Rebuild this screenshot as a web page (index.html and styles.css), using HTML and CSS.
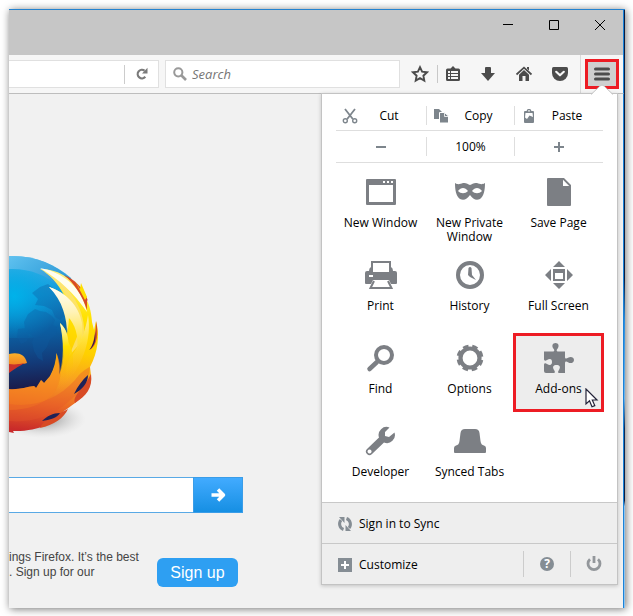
FILE: index.html
```html
<!DOCTYPE html>
<html lang="en">
<head>
<meta charset="utf-8">
<title>Firefox menu</title>
<link rel="stylesheet" href="styles.css">
</head>
<body>
<div class="window">
  <header class="titlebar">
    <button class="caption" aria-label="Minimize"><svg width="12" height="12"><path d="M1 5.500h10"/></svg></button>
    <button class="caption" aria-label="Maximize"><svg width="12" height="12"><path d="M1.500 1.500h9v9h-9z"/></svg></button>
    <button class="caption" aria-label="Close"><svg width="12" height="12"><path d="M1 1l10 10M11 1L1 11"/></svg></button>
  </header>

  <nav class="toolbar">
    <div class="urlbar">
      <input class="url" type="text" aria-label="Address">
      <button class="reload" aria-label="Reload"><svg width="14" height="14" viewBox="0 0 14 14"><path d="M10.300 9.800A4.300 4.300 0 1 1 9.600 3.600" fill="none" stroke="#7a7a7a" stroke-width="2.200"/><path d="M12.500.800v5.600H7z" fill="#7a7a7a"/></svg></button>
    </div>
    <label class="search">
      <svg width="14" height="14" viewBox="0 0 14 14" fill="none" stroke="#999" ><circle cx="5.300" cy="5.300" r="4.100" stroke-width="2"/><path d="M8.500 8.500l4.500 4.500" stroke-width="2.600"/></svg>
      <input type="text" placeholder="Search" aria-label="Search">
    </label>
    <div class="tools">
      <button class="tool" aria-label="Bookmark"><svg width="18" height="18" viewBox="0 0 18 18"><path d="M9 2.200l2.100 4.500 4.900.600-3.600 3.400.900 4.900L9 13.200l-4.300 2.400.900-4.900L2 7.300l4.900-.600z" fill="none" stroke="#4c4c4c" stroke-width="1.900"/></svg></button>
      <button class="tool tool-list" aria-label="Bookmarks list"><svg width="18" height="18" viewBox="0 0 18 18"><path fill="#4c4c4c" fill-rule="evenodd" d="M6.500 3.500L9 1l2.500 2.500h3A1.500 1.500 0 0 1 16 5v9.500a1.500 1.500 0 0 1-1.500 1.500h-11A1.500 1.500 0 0 1 2 14.500V5a1.500 1.500 0 0 1 1.500-1.500zM4 6v2h2V6zm3 0v2h7V6zM4 9v2h2V9zm3 0v2h7V9zm-3 3v2h2v-2zm3 0v2h7v-2z"/></svg></button>
      <button class="tool" aria-label="Downloads"><svg width="18" height="18" viewBox="0 0 18 18"><path fill="#4c4c4c" d="M7 2h4q1 0 1 1v5h4L9 16 2 8h4V3q0-1 1-1z"/></svg></button>
      <button class="tool" aria-label="Home"><svg width="18" height="18" viewBox="0 0 18 18"><path fill="none" stroke="#4c4c4c" stroke-width="1.700" d="M1.500 9.500L9 2.600l7.500 6.900"/><path fill="#4c4c4c" d="M9 5l5 4.700V16h-3.500v-5h-3v5H4V9.700zM12 2h2v3.500l-2-1.800z"/></svg></button>
      <button class="tool" aria-label="Pocket"><svg width="18" height="18" viewBox="0 0 18 18"><path fill="#4c4c4c" d="M2.500 2h13Q17 2 17 3.500V8a8 8 0 0 1-16 0V3.500Q1 2 2.500 2z"/><path d="M5.200 6.800L9 10.300l3.800-3.500" fill="none" stroke="#f6f6f6" stroke-width="2.200" stroke-linecap="round" stroke-linejoin="round"/></svg></button>
    </div>
    <div class="menu-slot"><button class="menu-button" aria-label="Open menu"><svg width="16" height="16" viewBox="0 0 16 16"><path d="M1.500 3h13M1.500 8h13M1.500 13h13" stroke="#4c4c4c" stroke-width="3" stroke-linecap="round"/></svg></button></div>
  </nav>

  <main class="page">
    <svg class="logo" width="110" height="190" viewBox="9 250 110 190" aria-hidden="true">
      <defs>
        <linearGradient id="globe" gradientUnits="userSpaceOnUse" x1="20" y1="256" x2="32" y2="390"><stop offset="0" stop-color="#4db8ea"/><stop offset=".3" stop-color="#129bdb"/><stop offset=".55" stop-color="#0b62a5"/><stop offset=".8" stop-color="#133a78"/><stop offset="1" stop-color="#1b1846"/></linearGradient>
        <radialGradient id="glow" gradientUnits="userSpaceOnUse" cx="14" cy="296" r="48"><stop offset="0" stop-color="#00b2ea"/><stop offset="1" stop-color="#00a0e0" stop-opacity="0"/></radialGradient>
        <linearGradient id="rim" gradientUnits="userSpaceOnUse" x1="9" y1="256" x2="60" y2="290"><stop offset="0" stop-color="#6cc6f2"/><stop offset="1" stop-color="#2f94d2"/></linearGradient>
        <linearGradient id="body" gradientUnits="userSpaceOnUse" x1="60" y1="275" x2="44" y2="432"><stop offset="0" stop-color="#fff07a"/><stop offset=".25" stop-color="#ffe200"/><stop offset=".48" stop-color="#ffd000"/><stop offset=".66" stop-color="#f8a021"/><stop offset=".82" stop-color="#ec6b25"/><stop offset="1" stop-color="#c92b2a"/></linearGradient>
        <linearGradient id="pale" gradientUnits="userSpaceOnUse" x1="55" y1="285" x2="66" y2="380"><stop offset="0" stop-color="#fff"/><stop offset=".3" stop-color="#fff3b8"/><stop offset=".6" stop-color="#ffe23a"/><stop offset="1" stop-color="#fbb41c" stop-opacity="0"/></linearGradient>
        <linearGradient id="tip" gradientUnits="userSpaceOnUse" x1="60" y1="322" x2="60" y2="392"><stop offset="0" stop-color="#fffbe0"/><stop offset=".35" stop-color="#ffe000"/><stop offset="1" stop-color="#f7931e" stop-opacity="0"/></linearGradient>
        <linearGradient id="beak" x1="0" y1="0" x2="0" y2="1"><stop offset="0" stop-color="#fbb02a"/><stop offset="1" stop-color="#ee7a1f"/></linearGradient>
        <radialGradient id="ground"><stop offset="0" stop-color="#666" stop-opacity=".8"/><stop offset="1" stop-color="#ccc" stop-opacity="0"/></radialGradient>
      </defs>
      <ellipse cx="42" cy="419" rx="44" ry="19" fill="url(#ground)"/>
      <path fill="url(#globe)" d="M9 256c25-1 46 8 62 22l13 40-20 62-55 20z"/>
      <path fill="url(#glow)" d="M9 256c25-1 46 8 62 22v60H9z"/>
      <path fill="url(#rim)" opacity=".75" d="M9 256c25-1 46 8 60 22l-8 10C46 274 27 268 9 269z"/>
      <path fill="#0d5ca0" opacity=".35" d="M32 293l8-6 8-3 6 5 7 3 6 13-1 9-6 6-5-3-3-7-8-4-9-1 3-6zM28 314l7-5 5 2 6 1 6 4 3 4-2 5 4 2-1 7-6 5-3 8-5 6 1 8-5-3-4-7-2-9 2-5-5-3-4-5-1-7zM18 329l8-1 3 5-2 8-6 3-4-7z"/>
      <path fill="url(#body)" d="M66 277C80 285 91 300 92 322l2 8 2-9c4 14 2 31-6 46l1 8c-1 17-11 25-27 36-4 11-28 21-51 20l1 2-5-1v-43c9 1 17-2 25-3l2 2 5-8 3 3 6-7c4-7 6-15 6.500-23 2.500 8 3.500 15 2.500 22 7-15 5-35 1-52 4 4 6 7 7 11 3-16-1-32-18-47 7 2 12 5 15 8-6-11-14-21-24-26 10 0 20 3 26 8z"/>
      <path fill="#fce27a" opacity=".75" d="M43 271c12 8 20 17 24 27 9 8 13 20 12 34l-10 24 14-16c5-22-7-52-40-69z"/>
      <path fill="#fff" opacity=".9" d="M40 268c18 3 37 15 44 34l3 10C73 292 61 281 40 268z"/>
      <path fill="url(#pale)" d="M49 287c16 5 30 18 33 36 1 12-1 20-5 27 2-14-2-26-9-33-1-12-8-22-19-30z"/>
      <path fill="url(#pale)" d="M49 287c10 4 18 14 20 27 0 9-1 14-2 20 0-15-4-33-18-47z"/>
      <path fill="url(#body)" d="M89 311c6 24 2 42-9 53l7-19c3-11 3-22 2-34z"/>
      <path fill="url(#pale)" d="M88 315c4 24-5 48-20 67-4-9-2-19 4-27 8-11 14-25 16-40z"/>
      <path fill="url(#tip)" d="M60 323c11 10 11 29 3 48l-7 18 3-14c5-17 5-32 1-52z"/>
      <path fill="url(#tip)" d="M68 342c9 15 6 34-8 50l-3-9c8-12 12-26 11-41z"/>
      <path fill="#f58220" opacity=".5" d="M56.500 353c6 15 6 29-4 42-11 10-26 15-43 15v-21c10 1 17-2 25-3l2 2 5-8 3 3 6-7c4-8 6-15 6-23z"/>
      <path fill="#e4572a" opacity=".35" d="M9 404c24 4 48-4 66-24 5-7 10-11 15-13-1 17-10 25-23 36-16 14-37 20-58 18z"/>
      <path fill="#d84b25" d="M64 275c10 4 20 13 24 26l-1-1v10c-5-15-13-27-23-35zM96 321c3 13 1 24-6 29 4-9 6-18 6-29zM91 374c2 14-5 22-16 29-3-7 9-15 16-29zM68 409c-4 9-14 16-28 19 4-10 16-12 28-19z"/>
      <path fill="#ffdf00" d="M75 281l5 8 1-6 6 14-2 3z"/>
      <path fill="#1e2258" d="M74 394c4-8 8-14 14-19 0 8-6 15-14 19zM42 421c5-5 11-8 18-8-3 5-10 7-18 8zM89 350c4-4 6-11 6-19 1 9 0 15-6 19z"/>
      <path fill="url(#beak)" d="M9 354c9-2 16 0 18 9-7 2-12 1-18 5z"/>
      <path fill="#c8302b" d="M9 364c6 1 11 0 16-1-6 3-9 5-16 10z"/>
    </svg>
    <form class="searchform">
      <input type="text" aria-label="Web search">
      <button class="go" type="button" aria-label="Go"><svg width="16" height="16" viewBox="0 0 16 16"><path d="M1.500 8H13M8 2.500L13.500 8 8 13.500" fill="none" stroke="#fff" stroke-width="3.500" stroke-linejoin="round"/></svg></button>
    </form>
    <section class="snippet">
      <p>ings Firefox. It’s the best<br>. Sign up for our</p>
      <button class="signup">Sign up</button>
    </section>
  </main>

  <aside class="panel">
    <svg class="arrow" width="22" height="12" viewBox="0 0 22 12"><path d="M0 11L9 2q2-2 4 0l9 9v1H0z" fill="#fff"/><path d="M0 10.500L9 2q2-2 4 0l9 8.500" fill="none" stroke="#c3c3c3"/></svg>
    <div class="panel-body">
      <div class="strip edit">
        <button><svg width="16" height="16" viewBox="0 0 16 16" fill="none" stroke="#7d858c"><path d="M3 1l7.800 10M13 1L5.200 11" stroke-width="1.800"/><circle cx="3.300" cy="12.800" r="2" stroke-width="1.400"/><circle cx="12.700" cy="12.800" r="2" stroke-width="1.400"/></svg><span>Cut</span></button>
        <button><svg width="16" height="16" viewBox="0 0 16 16" fill="#7d858c"><path d="M1 1h5l3 3v7H1z"/><path d="M6.500 4.500h5l4 3.500v7h-9z" stroke="#fff"/><path d="M11.500 5v3.500H15" fill="none" stroke="#fff" stroke-width=".8"/></svg><span>Copy</span></button>
        <button><svg width="16" height="16" viewBox="0 0 16 16"><path fill="#7d858c" fill-rule="evenodd" d="M4 3h1.500l1.200-2h2.600l1.200 2H12q1 0 1 1v10q0 1-1 1H4q-1 0-1-1V4q0-1 1-1zm3.200-.800v1.300h1.600V2.200z"/><path fill="#fff" d="M4.500 5h7l.500 4-3.500-1.500L6 11l-2-1.500z"/></svg><span>Paste</span></button>
      </div>
      <div class="strip zoom">
        <button aria-label="Zoom out"><svg width="10" height="10"><path d="M0 5h10" stroke="#7d858c" stroke-width="2"/></svg></button>
        <button>100%</button>
        <button aria-label="Zoom in"><svg width="10" height="10"><path d="M0 5h10M5 0v10" stroke="#7d858c" stroke-width="2"/></svg></button>
      </div>
      <div class="tiles">
        <button class="tile"><svg viewBox="0 0 32 32"><path fill-rule="evenodd" d="M2 3h28q1 0 1 1v24q0 1-1 1H2q-1 0-1-1V4q0-1 1-1zm2 6v17h24V9zM18 5v2h2V5zm4 0v2h2V5zm4 0v2h2V5z"/></svg>New Window</button>
        <button class="tile"><svg viewBox="0 0 32 32"><path fill-rule="evenodd" d="M1 7c3 2 5 1 8 0 3-.500 5 1 7 2 2-1 4-2.500 7-2 3 1 5 2 8 0 0 7-1 13-5 16-4 2-7 0-10-4-3 4-6 6-10 4C2 20 1 14 1 7zM4 15c3 3 7 3 10 0-3-4-7-4-10 0zm14 0c3 3 7 3 10 0-3-4-7-4-10 0z"/></svg>New Private Window</button>
        <button class="tile"><svg viewBox="0 0 32 32"><path fill-rule="evenodd" d="M5 2h16l7 7v20q0 1-1 1H5q-1 0-1-1V3q0-1 1-1zm15 1.800V10h6.200z"/></svg>Save Page</button>
        <button class="tile"><svg viewBox="0 0 32 32"><path d="M7 13V3h18v10" fill="#fff" stroke="#7c7f84" stroke-width="2"/><path fill-rule="evenodd" d="M2 12h2q0-3 2-4v5h20V8q2 1 2 4h2q2 0 2 2v10q0 1-1 1h-5l-2-4H8l-2 4H1q-1 0-1-1V14q0-2 2-2zm2 4v2h4v-2z"/><path d="M9 22L5.500 29h21L23 22" fill="#fff" stroke="#7c7f84" stroke-width="2"/></svg>Print</button>
        <button class="tile"><svg viewBox="0 0 32 32"><circle cx="16" cy="16" r="12" fill="none" stroke="#7c7f84" stroke-width="4"/><path d="M14.500 9q1.500-2 3 0l.500 7 4 5-6-3-2-2z"/></svg>History</button>
        <button class="tile"><svg viewBox="0 0 32 32"><path fill-rule="evenodd" d="M16 2l6 6H10zM16 30l6-6H10zM2 16l6-6v12zM30 16l-6-6v12zM10 10h12v12H10zm2 4v6h8v-6z"/></svg>Full Screen</button>
        <button class="tile"><svg viewBox="0 0 32 32"><circle cx="19" cy="13" r="8" fill="none" stroke="#7c7f84" stroke-width="4"/><path d="M12 20l-7.500 7" fill="none" stroke="#7c7f84" stroke-width="4.500" stroke-linecap="round"/></svg>Find</button>
        <button class="tile"><svg viewBox="0 0 32 32"><circle cx="16" cy="16" r="9.500" fill="none" stroke="#7c7f84" stroke-width="4.200"/><circle cx="16" cy="16" r="12" fill="none" stroke="#7c7f84" stroke-width="2.800" stroke-dasharray="5.600 3.825" transform="rotate(9.200 16 16)"/></svg>Options</button>
        <button class="tile active"><svg viewBox="0 0 32 32"><path d="M1 9.500h8.500c2.500 0 2-1.500.800-3C8.500 4 9.500 1 12.500 1s4 3 2.200 5.500c-1.200 1.500-1.700 3 .800 3H22V15c0 2 1.500 2 3 .800 2.500-1.800 6-.800 6 2.200s-3.500 4-6 2.200C23.500 19 22 19 22 21v10h-5.500c-2 0-1.500-1.500-.500-3 2-3.500.500-5-2.500-5s-4.500 1.500-2.500 5c1 1.500 1.500 3-.500 3H3q-2 0-2-2v-6c0-2 1.500-2 3-1 3.500 2 5 .500 5-2s-1.500-4-5-2c-1.500 1-3 1-3-1z"/></svg>Add-ons<svg class="cursor" viewBox="0 0 14 20"><path d="M1 1v15l3.500-3.200 2.500 6 2.800-1.200-2.500-5.600H12z" fill="#fff" stroke="#222238" stroke-width="1.200"/></svg></button>
        <button class="tile"><svg viewBox="0 0 32 32"><path fill-rule="evenodd" d="M29.500 7.500A8 8 0 0 1 19 17.500L7 29a3.400 3.400 0 0 1-5-5L14 12.500A8 8 0 0 1 24.500 2.500L20 7v4l4 1 5.500-4.500zM4.500 24.500a2 2 0 1 0 .1 0z"/></svg>Developer</button>
        <button class="tile"><svg viewBox="0 0 32 32"><path d="M11 4h10q4 0 4.500 4l1 8q.500 4 3.500 4.500 2 .500 2 2.500v4q0 1-1 1H1q-1 0-1-1v-4q0-2 2-2.500 3-.500 3.500-4.500l1-8Q7 4 11 4z"/></svg>Synced Tabs</button>
      </div>
    </div>
    <footer class="panel-footer">
      <button class="row"><svg width="16" height="16" viewBox="0 0 16 16"><path d="M6.500 13.500A6 6 0 0 1 4 4M9.500 2.500A6 6 0 0 1 12 12" fill="none" stroke="#858d94" stroke-width="3"/><path d="M2 1h5.500v6zM14 15H8.500V9z" fill="#858d94"/></svg>Sign in to Sync</button>
      <div class="row-split">
        <button class="row"><svg width="16" height="16" viewBox="0 0 16 16"><path fill="#858d94" d="M1 1h14v14H1z"/><path d="M4 8h8M8 4v8" stroke="#fff" stroke-width="2"/></svg>Customize</button>
        <button class="round" aria-label="Help"><span class="help">?</span></button>
        <button class="round" aria-label="Exit"><svg width="16" height="16" viewBox="0 0 16 16" fill="none" stroke="#93979b"><path d="M4 3.200a6 6 0 1 0 8 0" stroke-width="2.800"/><path d="M8 0v7" stroke-width="2.800"/></svg></button>
      </div>
    </footer>
  </aside>
</div>
</body>
</html>
```

FILE: styles.css
```css
* { box-sizing: border-box; }

html { height: 100%; background: #fff; }

body {
  height: 100%;
  margin: 0;
  padding: 9px 8px 8px 9px;
  font: 12px/14px "Open Sans", "Noto Sans", sans-serif;
  color: #000;
}

button, input {
  margin: 0;
  padding: 0;
  border: 0;
  background: none;
  font: inherit;
  color: inherit;
}

svg { display: block; flex: none; }

.window {
  position: relative;
  display: flex;
  flex-direction: column;
  min-height: 100%;
  padding-right: 1px;
  border-top: 1px solid #2482cf;
  background: linear-gradient(#0b1c40 45%, #2a8ee0 52%, #6fb4ea 65%, #0b2a58 70%, #0b1c40 82%, #8fc4ee 83%);
  box-shadow: 1px 1px 8px rgba(0, 0, 0, .55);
}

.titlebar {
  display: flex;
  justify-content: flex-end;
  height: 45px;
  background: #c6c6c6;
  border-right: 1px solid #1a82d8;
}

.caption {
  display: grid;
  place-items: center;
  width: 46px;
  height: 30px;
}

.caption svg { fill: none; stroke: #000; }

/* Navigation toolbar */
.toolbar {
  display: flex;
  align-items: center;
  height: 39px;
  background: #f6f6f6;
  border-right: 1px solid #1a82d8;
  border-bottom: 1px solid #bdbdbd;
}

.urlbar, .search {
  display: flex;
  align-items: center;
  height: 28px;
  background: #fff;
  border: 1px solid #e0e0e0;
}

.urlbar { flex: 0 0 150px; min-width: 0; border-left: 0; }
.url { flex: 1; min-width: 0; }

.reload {
  display: grid;
  place-items: center;
  width: 34px;
  height: 19px;
  border-left: 1px solid #ccc;
}

.search {
  flex: 1;
  gap: 5px;
  margin-left: 6px;
  padding-left: 7px;
}

.search input {
  flex: 1;
  min-width: 0;
  font-size: 13px;
  line-height: 18px;
  font-style: italic;
}

.search input::placeholder { color: #767676; opacity: 1; }

.tools { display: flex; padding: 0 2px 0 3px; }

.tool {
  display: grid;
  place-items: center;
  width: 36px;
  height: 18px;
}

.tool:first-child { width: 35px; border-right: 1px solid #c8c8c8; }
.tool-list { width: 32px; }
.tool-list svg { margin-right: 3px; }

.menu-slot {
  display: flex;
  align-items: center;
  height: 38px;
  padding: 0 4px;
  border-left: 1px solid #dadada;
}

.menu-button {
  display: grid;
  place-items: center;
  width: 34px;
  height: 30px;
  background: #cfcfcf;
  border: 3px solid #ed1c24;
}

/* Page */
.page {
  flex: 1;
  padding-top: 156px;
  background: #f1f1f1;
  border-right: 1px solid #1a82d8;
}

.searchform {
  display: flex;
  width: 234px;
  height: 36px;
  margin-top: 37px;
}

.searchform input {
  flex: 1;
  min-width: 0;
  background: #fff;
  border: solid #59a9e5;
  border-width: 1px 0;
}

.go {
  display: grid;
  place-items: center;
  width: 50px;
  background: linear-gradient(#42abff, #168fe3);
  border: 1px solid #3a9de8;
}

.snippet {
  display: flex;
  gap: 16px;
  margin-top: 36px;
  font: 12px/15px "Liberation Sans", sans-serif;
  color: #444;
}

.snippet p { width: 132px; margin: 1px 0 0; white-space: nowrap; }

.signup {
  width: 81px;
  height: 29px;
  margin-top: 9px;
  border-radius: 6px;
  background: #2e9ff2;
  color: #fff;
  font-size: 16px;
}

/* Application menu */
.panel {
  position: absolute;
  top: 83px;
  right: 7px;
  width: 297px;
  border: 1px solid #c3c3c3;
  background: #fff;
  box-shadow: 0 1px 4px rgba(0, 0, 0, .2);
}

.arrow { position: absolute; top: -10px; right: 4px; }

.panel-body { padding: 6px 14px 8px; }

.strip {
  display: grid;
  grid-template-columns: 90px 88px 1fr;
  align-items: center;
  border-bottom: 1px solid #dedede;
}

.strip button {
  display: flex;
  align-items: center;
  justify-content: center;
  height: 19px;
}

.strip button + button { border-left: 1px solid #dedede; }
.edit { height: 31px; }
.edit button { padding: 2px 6px 0; }
.edit span { flex: 1; }
.zoom { height: 32px; }

.tiles {
  display: grid;
  grid-template-columns: repeat(3, 1fr);
  grid-auto-rows: 77px;
  gap: 6px 0;
  padding-top: 5px;
}

.tile {
  position: relative;
  display: flex;
  flex-direction: column;
  align-items: center;
  padding: 8px 4px 0;
}

.tile > svg { width: 32px; height: 32px; margin-bottom: 8px; fill: #7c7f84; }

.active { background: #ededed; outline: 3px solid #ed1c24; outline-offset: -2px; }

.tile > .cursor {
  position: absolute;
  right: 4px;
  bottom: 3px;
  width: 14px;
  height: 20px;
  margin: 0;
}

.panel-footer { background: #eee; }

.row {
  display: flex;
  align-items: center;
  gap: 6px;
  width: 100%;
  height: 40px;
  padding: 2px 0 0 15px;
}

.panel-footer > * { border-top: 1px solid #c8c8c8; }
.panel-footer > .row { height: 41px; }
.row-split { display: flex; align-items: center; }

.round {
  display: grid;
  place-items: center;
  flex: 0 0 47px;
  height: 26px;
  border-left: 1px solid #ccc;
}

.help {
  width: 14px;
  height: 14px;
  border-radius: 50%;
  background: #858d94;
  color: #fff;
  font-weight: 700;
}
```
